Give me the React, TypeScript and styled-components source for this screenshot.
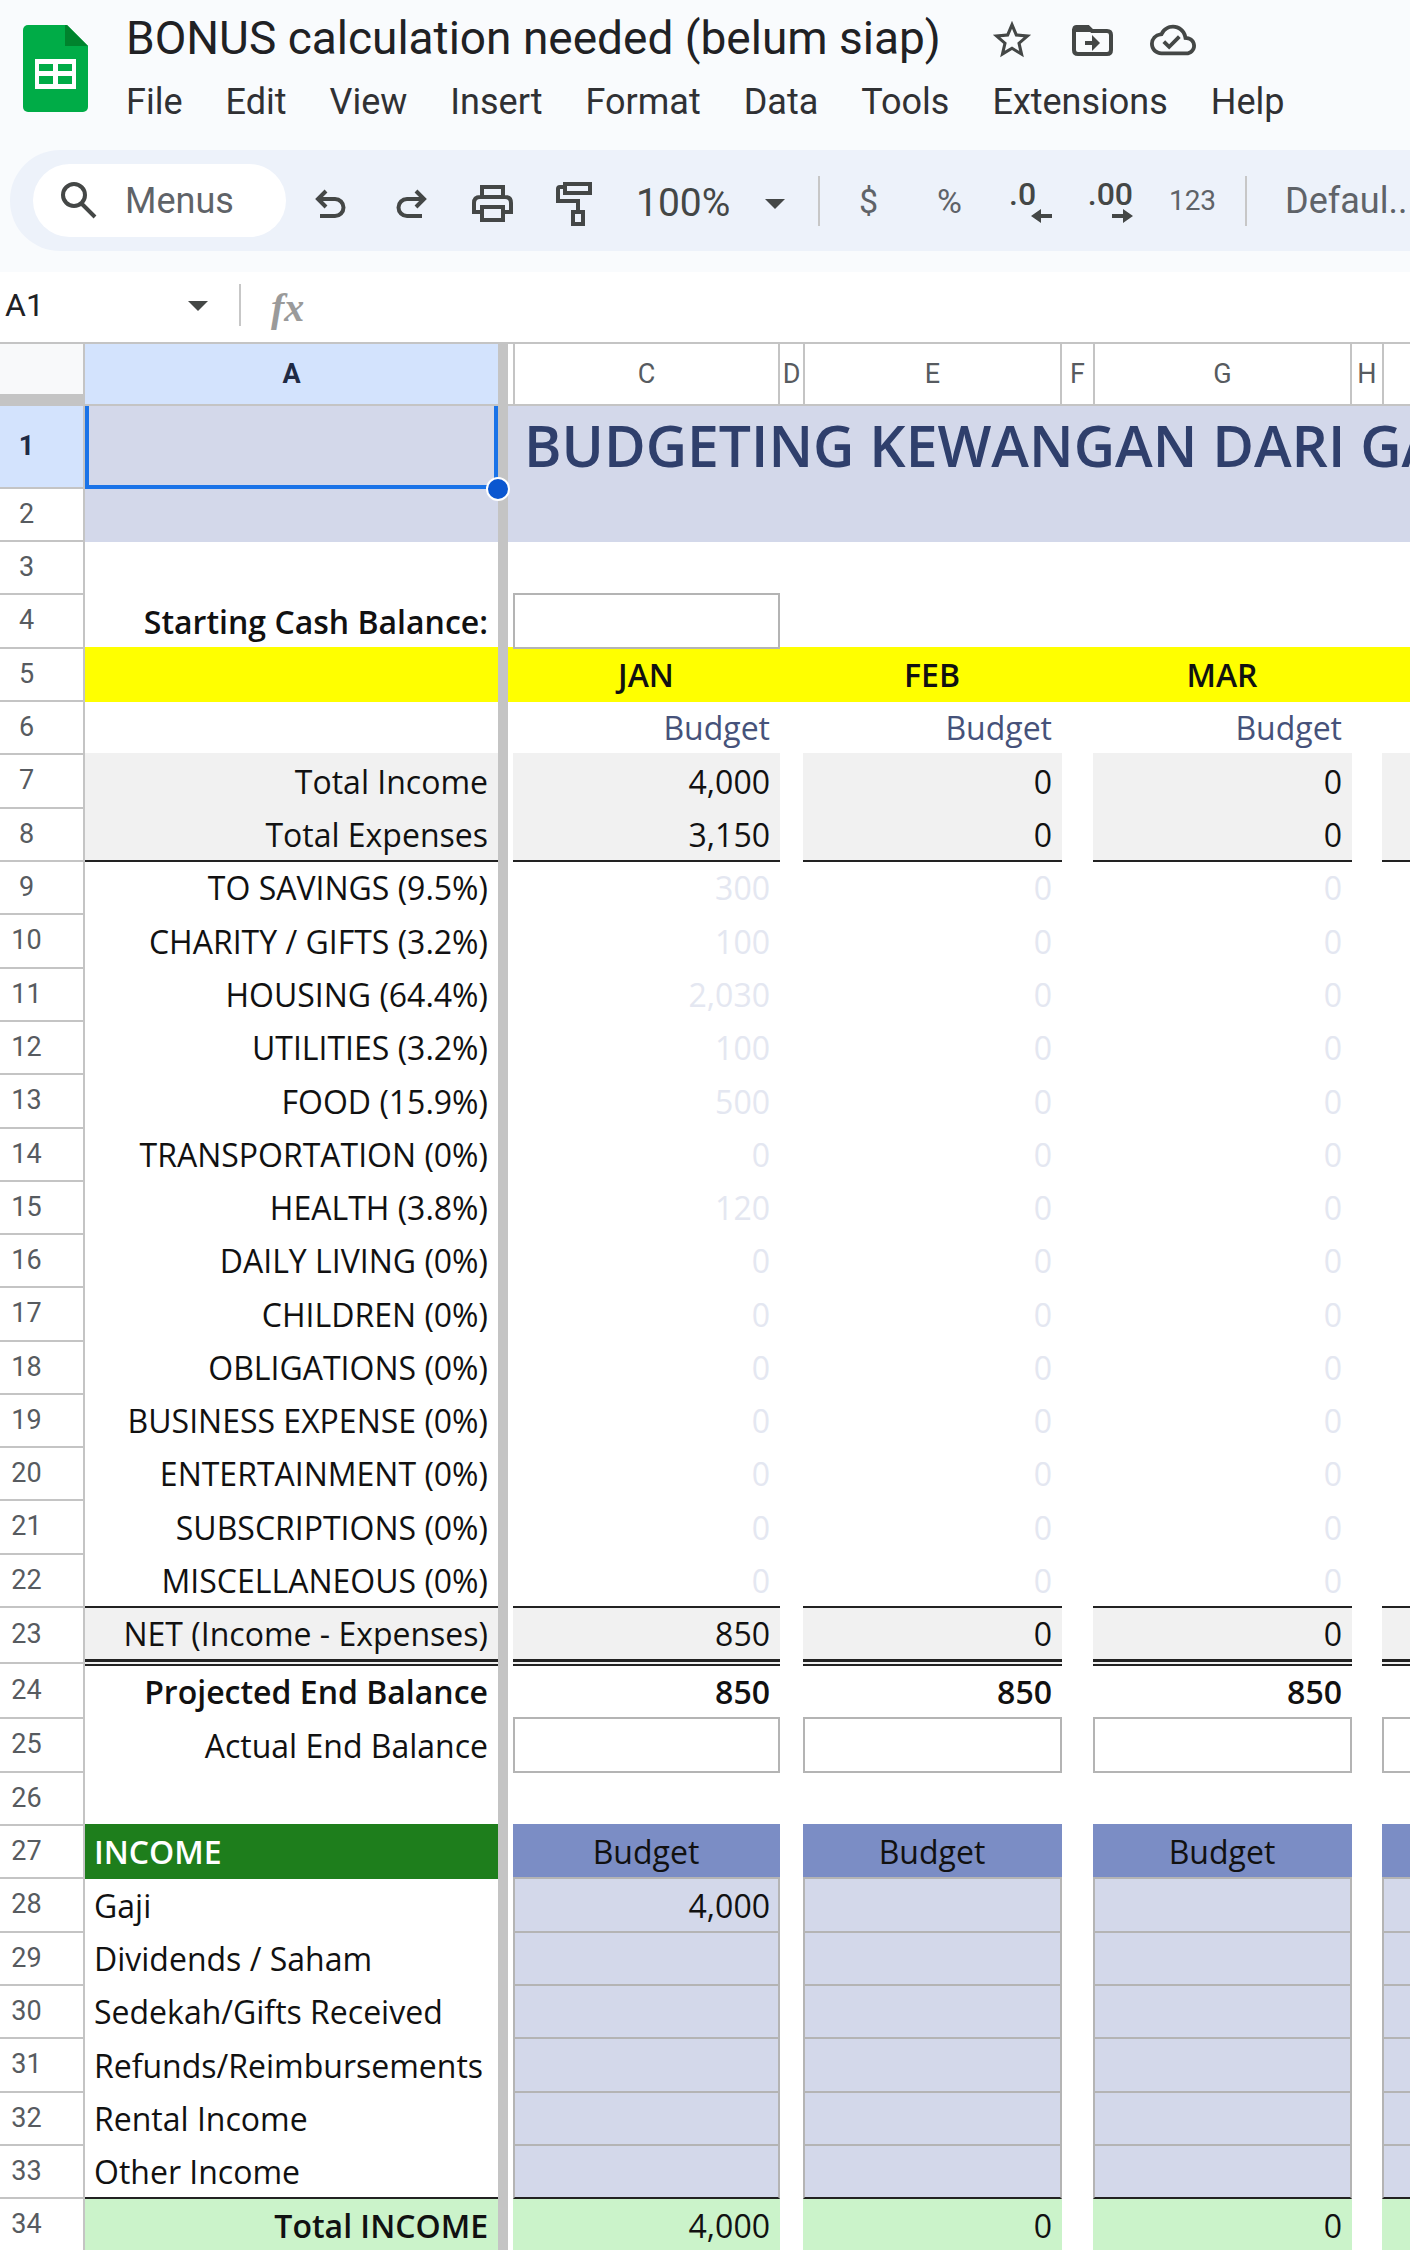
import React from "react";
import styled, { createGlobalStyle, css } from "styled-components";
import { MdStarBorder, MdOutlineCloudDone, MdArrowDropDown } from "react-icons/md";

const UI = `Roboto, "Liberation Sans", sans-serif`;
const SHEET = `"Open Sans", "Noto Sans", sans-serif`;

const C = {
  chrome: "#f9fbfd",
  bar: "#edf2fa",
  icon: "#444746",
  line: "#c4c4c4",
  box: "#b4b4b4",
  ink: "#222222",
  pale: "#d3d8ea",
  blue: "#7b8dc5",
  grey: "#f1f1f1",
  yellow: "#ffff00",
  green: "#1e7e1c",
  mint: "#cbf3ca",
  navy: "#2f3f6c",
  white: "#ffffff",
};

const Global = createGlobalStyle`
  *, *::before, *::after { box-sizing: border-box; }
  body { margin: 0; background: #fff; }
  button, input, select { font: inherit; color: inherit; border: 0; background: none; padding: 0; margin: 0; outline: 0; }
`;

const Page = styled.div`
  display: flex;
  flex-direction: column;
  height: 100vh;
  overflow: hidden;
  font-family: ${UI};
  color: #202124;
`;

const Chrome = styled.header`
  background: ${C.chrome};
  padding: 12px 0 21px;
`;

const TitleBar = styled.div`
  display: flex;
  align-items: flex-start;
  gap: 30px;
  padding: 0 23px;
  height: 138px;
`;

const Logo = styled.svg`
  width: 65px;
  height: 87px;
  margin-top: 13px;
  flex: none;
`;

const TitleColumn = styled.div`
  display: flex;
  flex-direction: column;
  gap: 8px;
  padding-left: 8px;
`;

const TitleRow = styled.div`
  display: flex;
  align-items: center;
  gap: 48px;
  height: 52px;
`;

const DocTitle = styled.h1`
  margin: 0;
  font-size: 46px;
  line-height: 52px;
  font-weight: 400;
  white-space: nowrap;
`;

const TitleActions = styled.div`
  display: flex;
  align-items: center;
  gap: 37px;
  padding-top: 4px;
`;

const IconButton = styled.button`
  display: flex;
  align-items: center;
  justify-content: center;
  flex: none;
  color: ${C.icon};
`;

const MenuBar = styled.nav`
  display: flex;
  gap: 43px;
  font-size: 36px;
  line-height: 60px;
  color: #303134;
`;

const Toolbar = styled.div`
  display: flex;
  align-items: center;
  height: 101px;
  margin-left: 10px;
  padding-left: 23px;
  border-radius: 50px 0 0 50px;
  background: ${C.bar};
  color: ${C.icon};
  overflow: hidden;
`;

const MenuSearch = styled.label`
  display: flex;
  align-items: center;
  gap: 28px;
  width: 253px;
  height: 73px;
  padding-left: 27px;
  border-radius: 37px;
  background: ${C.white};
  flex: none;
  input {
    width: 120px;
    font-size: 36px;
    line-height: 48px;
  }
  input::placeholder { color: #5f6368; opacity: 1; }
`;

const ToolGroup = styled.div`
  display: grid;
  grid-auto-flow: column;
  grid-auto-columns: 81px;
  align-items: center;
  flex: none;
  padding: 0 12px 0 8px;
`;

const HistoryTools = styled(ToolGroup)`
  padding: 5px 0 0 4px;
`;

const Zoom = styled.label`
  display: flex;
  align-items: center;
  flex: none;
  padding: 4px 19px 0 22px;
  select {
    appearance: none;
    width: 115px;
    font-size: 39px;
    line-height: 48px;
  }
`;

const Divider = styled.span<{ $h: number }>`
  width: 2px;
  height: ${(p) => p.$h}px;
  background: #c7c7c7;
  flex: none;
`;

const TextTool = styled.button<{ $size: number }>`
  font-size: ${(p) => p.$size}px;
  line-height: 48px;
  flex: none;
  color: #5f6368;
`;

const FontTool = styled(TextTool)`
  padding-left: 38px;
`;

const FormulaBar = styled.div`
  display: flex;
  align-items: center;
  height: 70px;
  background: ${C.white};
  flex: none;
  padding: 0 0 4px 5px;
`;

const NameField = styled.div`
  display: flex;
  align-items: center;
  width: 234px;
`;

const NameBox = styled.input`
  width: 169px;
  font-size: 32px;
  line-height: 40px;
`;

const Caret = styled.button`
  display: flex;
  width: 48px;
  justify-content: center;
  color: ${C.icon};
`;

const Fx = styled.label`
  padding: 6px 0 0 30px;
  font: italic 700 40px/44px "Liberation Serif", serif;
  color: #9a9a9a;
`;

const FormulaInput = styled.input`
  flex: 1;
  padding-left: 24px;
  font-size: 32px;
`;

const GridArea = styled.main`
  flex: 1;
  min-height: 0;
  overflow: hidden;
  border-top: 2px solid ${C.line};
  background: ${C.white};
`;

const Table = styled.table`
  table-layout: fixed;
  width: 100%;
  min-width: 1641px;
  border-collapse: separate;
  border-spacing: 0;
`;

const Col = styled.col<{ $w: number }>`
  width: ${(p) => p.$w}px;
`;

const HeadRow = styled.tr`
  height: 62px;
`;

const ColHead = styled.th<{ $wide?: boolean; $on?: boolean }>`
  padding: 0;
  font: ${(p) => (p.$on ? 700 : 400)} 27px/32px ${UI};
  color: ${(p) => (p.$on ? "#1f2a44" : "#575b60")};
  background: ${(p) => (p.$on ? "#d3e3fd" : C.white)};
  border-bottom: 2px solid ${C.line};
  ${(p) =>
    p.$wide &&
    css`
      border-left: 2px solid ${C.line};
      border-right: 2px solid ${C.line};
    `}
`;

const Corner = styled.td`
  padding: 0;
  background: #f8f9fa;
  border-right: 2px solid ${C.line};
  border-bottom: 12px solid ${C.line};
`;

const Freeze = styled.td`
  padding: 0;
  background: ${C.line};
`;

const Row = styled.tr<{ $h: number }>`
  height: ${(p) => p.$h}px;
`;

const RowHead = styled.th<{ $on?: boolean }>`
  padding: 0 30px 2px 0;
  font: ${(p) => (p.$on ? 700 : 400)} 27px/32px ${UI};
  color: ${(p) => (p.$on ? "#1f2a44" : "#575b60")};
  background: ${(p) => (p.$on ? "#d3e3fd" : C.white)};
  border-right: 2px solid ${C.line};
  border-bottom: 2px solid ${C.line};
`;

type Align = "left" | "right" | "center";

const Cell = styled.td<{
  $bg?: string;
  $fg?: string;
  $bold?: boolean;
  $align?: Align;
  $below?: string;
  $above?: string;
  $sides?: boolean;
  $double?: boolean;
  $middle?: boolean;
}>`
  padding: 0 10px ${(p) => (p.$middle ? 3 : 5)}px 9px;
  vertical-align: ${(p) => (p.$middle ? "middle" : "bottom")};
  font: ${(p) => (p.$bold ? 600 : 400)} 32px/40px ${SHEET};
  text-align: ${(p) => p.$align ?? "right"};
  white-space: nowrap;
  color: ${(p) => p.$fg ?? "#111"};
  background: ${(p) => p.$bg ?? C.white};
  border-bottom: 2px solid ${(p) => p.$below ?? "transparent"};
  ${(p) => p.$above && css`border-top: 2px solid ${p.$above};`}
  ${(p) =>
    p.$sides &&
    css`
      border-left: 2px solid ${C.box};
      border-right: 2px solid ${C.box};
      padding-left: 7px;
      padding-right: 8px;
    `}
  ${(p) => p.$double && css`box-shadow: inset 0 -3px 0 ${C.ink};`}
`;

const TitleCell = styled(Cell)`
  padding: 0 0 4px 11px;
  font-size: 57px;
  line-height: 72px;
  text-align: left;
`;

const SelectedCell = styled(Cell)`
  position: relative;
  border: 4px solid #1a73e8;
  border-top: 0;
  &::after {
    content: "";
    position: absolute;
    right: -16px;
    bottom: -16px;
    width: 24px;
    height: 24px;
    border: 2px solid #fff;
    border-radius: 50%;
    background: #0b57d0;
  }
`;

type Look = {
  bg?: string;
  fg?: string;
  bold?: boolean;
  align?: Align;
  below?: string;
  above?: string;
  sides?: boolean;
  double?: boolean;
  middle?: boolean;
};

type RowData = {
  h?: number;
  label?: string;
  values?: string[];
  a?: Look;
  v?: Look;
  gap?: Look;
};

const faded: Look = { fg: "#e4e7f1" };
const entry: Look = { bg: C.pale, below: C.box, sides: true };
const left: Look = { align: "left" };
const totals: Look = { bg: C.grey };
const band = (bg: string): Look => ({ bg });

const category = (label: string, jan: string, h = 53): RowData => ({
  h,
  label,
  values: [jan, "0", "0"],
  v: faded,
});

const rows: RowData[] = [
  { h: 83 },
  { a: band(C.pale), v: band(C.pale), gap: band(C.pale) },
  {},
  {
    h: 54,
    label: "Starting Cash Balance:",
    a: { bold: true, below: C.yellow },
    v: { below: C.yellow },
    gap: { below: C.yellow },
  },
  {
    values: ["JAN", "FEB", "MAR"],
    a: band(C.yellow),
    v: { bg: C.yellow, bold: true, align: "center" },
    gap: band(C.yellow),
  },
  { values: ["Budget", "Budget", "Budget"], a: { below: C.grey }, v: { fg: "#46527a", below: C.grey } },
  { h: 54, label: "Total Income", values: ["4,000", "0", "0"], a: totals, v: totals },
  {
    label: "Total Expenses",
    values: ["3,150", "0", "0"],
    a: { ...totals, below: C.ink },
    v: { ...totals, below: C.ink },
  },
  category("TO SAVINGS (9.5%)", "300"),
  category("CHARITY / GIFTS (3.2%)", "100", 54),
  category("HOUSING (64.4%)", "2,030"),
  category("UTILITIES (3.2%)", "100"),
  category("FOOD (15.9%)", "500", 54),
  category("TRANSPORTATION (0%)", "0"),
  category("HEALTH (3.8%)", "120"),
  category("DAILY LIVING (0%)", "0"),
  category("CHILDREN (0%)", "0", 54),
  category("OBLIGATIONS (0%)", "0"),
  category("BUSINESS EXPENSE (0%)", "0"),
  category("ENTERTAINMENT (0%)", "0"),
  category("SUBSCRIPTIONS (0%)", "0", 54),
  {
    label: "MISCELLANEOUS (0%)",
    values: ["0", "0", "0"],
    a: { below: C.ink },
    v: { ...faded, below: C.ink },
  },
  {
    h: 56,
    label: "NET (Income - Expenses)",
    values: ["850", "0", "0"],
    a: { bg: C.grey, double: true, middle: true },
    v: { bg: C.grey, double: true, middle: true },
  },
  {
    h: 55,
    label: "Projected End Balance",
    values: ["850", "850", "850"],
    a: { bold: true, above: C.ink },
    v: { bold: true, above: C.ink, below: C.box },
  },
  { h: 54, label: "Actual End Balance", v: { sides: true, below: C.box } },
  { a: { below: C.green }, v: { below: C.blue } },
  {
    label: "INCOME",
    values: ["Budget", "Budget", "Budget"],
    a: { bg: C.green, fg: "#fff", bold: true, align: "left" },
    v: { bg: C.blue, align: "center", below: C.box },
  },
  { h: 54, label: "Gaji", values: ["4,000"], a: left, v: entry },
  { label: "Dividends / Saham", a: left, v: entry },
  { label: "Sedekah/Gifts Received", a: left, v: entry },
  { h: 54, label: "Refunds/Reimbursements", a: left, v: entry },
  { label: "Rental Income", a: left, v: entry },
  { label: "Other Income", a: { ...left, below: C.ink }, v: { ...entry, below: C.ink } },
  {
    h: 54,
    label: "Total INCOME",
    values: ["4,000", "0", "0"],
    a: { bg: C.mint, bold: true },
    v: { bg: C.mint },
  },
];

const look = (l: Look = {}) => ({
  $bg: l.bg,
  $fg: l.fg,
  $bold: l.bold,
  $align: l.align,
  $below: l.below,
  $above: l.above,
  $sides: l.sides,
  $double: l.double,
  $middle: l.middle,
});

const valueLook = (row: number, col: number, l?: Look): Look | undefined => {
  if (col === 0 && row === 3) return { below: C.box };
  if (col === 0 && row === 4) return { sides: true, below: C.box };
  return l;
};

function SheetRow({ n, row }: { n: number; row: RowData }) {
  if (n === 1) {
    return (
      <Row $h={row.h ?? 53}>
        <RowHead scope="row" $on>1</RowHead>
        <SelectedCell $bg={C.pale} />
        <Freeze />
        <Cell $bg={C.pale} />
        <TitleCell colSpan={7} $bg={C.pale} $fg={C.navy} $bold $middle>
          BUDGETING KEWANGAN DARI GA
        </TitleCell>
      </Row>
    );
  }
  return (
    <Row $h={row.h ?? 53}>
      <RowHead scope="row">{n}</RowHead>
      <Cell {...look(row.a)}>{row.label}</Cell>
      <Freeze />
      <Cell {...look(row.gap)} />
      {[0, 1, 2, 3].map((i) => (
        <React.Fragment key={i}>
          {i > 0 && <Cell {...look(row.gap)} />}
          <Cell {...look(valueLook(n, i, row.v))}>{row.values?.[i]}</Cell>
        </React.Fragment>
      ))}
    </Row>
  );
}

const SheetsLogo = () => (
  <Logo viewBox="0 0 65 87" aria-hidden="true">
    <path d="M5 0h39l21 21v61a5 5 0 0 1-5 5H5a5 5 0 0 1-5-5V5a5 5 0 0 1 5-5z" fill="#00ac47" />
    <path d="M42 0h2l21 21H42z" fill="#00832d" />
    <path d="M12 34h41v30H12zM16 39v7h14v-7zM35 39v7h14v-7zM16 51v8h14v-8zM35 51v8h14v-8z" fill="#fff" fillRule="evenodd" />
  </Logo>
);

const Stroke = ({ w, h, d, sw = 4 }: { w: number; h: number; d: string; sw?: number }) => (
  <svg width={w} height={h} viewBox={`0 0 ${w} ${h}`} fill="none" stroke="currentColor" strokeWidth={sw} aria-hidden="true">
    <path d={d} />
  </svg>
);

const FolderMove = () => (
  <svg width="41" height="31" viewBox="0 0 41 31" fill="none" stroke="currentColor" strokeWidth="4" aria-hidden="true">
    <path d="M2 4v21q0 4 4 4h29q4 0 4-4V10q0-4-4-4H20l-4-4H4q-2 0-2 4z" />
    <path d="M2 2h14l5 5H2z" fill="currentColor" stroke="none" />
    <path d="M13 18h10" />
    <path d="M20 10l8 8-8 8z" fill="currentColor" stroke="none" />
  </svg>
);

const DecimalText = styled.span`
  font-size: 32px;
  font-weight: 500;
  line-height: 30px;
`;

const DecimalTool = styled(IconButton)<{ $start?: boolean }>`
  flex-direction: column;
  align-items: flex-end;
  width: 43px;
  justify-self: center;
  ${DecimalText} {
    align-self: ${(p) => (p.$start ? "flex-start" : "flex-end")};
  }
`;

const ArrowLeft = () => (
  <svg width="21" height="14" viewBox="0 0 21 14" fill="currentColor" aria-hidden="true">
    <path d="M0 7l10-7v5h11v4H10v5z" />
  </svg>
);

const ArrowRight = () => (
  <svg width="21" height="14" viewBox="0 0 21 14" fill="currentColor" aria-hidden="true">
    <path d="M21 7L11 0v5H0v4h11v5z" />
  </svg>
);

const columns = [85, 413, 10, 5, 267, 23, 259, 31, 259, 30, 259];
const menus = ["File", "Edit", "View", "Insert", "Format", "Data", "Tools", "Extensions", "Help"];

export default function App() {
  return (
    <Page>
      <Global />
      <Chrome>
        <TitleBar>
          <SheetsLogo />
          <TitleColumn>
            <TitleRow>
              <DocTitle>BONUS calculation needed (belum siap)</DocTitle>
              <TitleActions>
                <IconButton aria-label="Star"><MdStarBorder size={46} /></IconButton>
                <IconButton aria-label="Move"><FolderMove /></IconButton>
                <IconButton aria-label="Saved to Drive"><MdOutlineCloudDone size={46} /></IconButton>
              </TitleActions>
            </TitleRow>
            <MenuBar>
              {menus.map((m) => (
                <button key={m}>{m}</button>
              ))}
            </MenuBar>
          </TitleColumn>
        </TitleBar>
        <Toolbar>
          <MenuSearch>
            <Stroke w={37} h={37} d="M25 13a11 11 0 1 1-22 0a11 11 0 1 1 22 0M21 21l14 14" />
            <input placeholder="Menus" aria-label="Menus" />
          </MenuSearch>
          <HistoryTools>
            <IconButton aria-label="Undo"><Stroke w={31} h={29} d="M11 2L3 10l8 8M3 10h17a8 8 0 0 1 0 17H5" /></IconButton>
            <IconButton aria-label="Redo"><Stroke w={31} h={29} d="M20 2l8 8-8 8M28 10H11a8 8 0 0 0 0 17h15" /></IconButton>
            <IconButton aria-label="Print">
              <Stroke w={41} h={37} d="M10 12V2h21v10M9 27H2V18q0-6 6-6h25q6 0 6 6v9h-7M10 22h21v13H10z" />
            </IconButton>
            <IconButton aria-label="Paint format">
              <Stroke w={37} h={45} d="M10 3h25v9H10zM10 6H5q-2 0-2 2v12h20v10M18 31h10v12H18z" />
            </IconButton>
          </HistoryTools>
          <Zoom>
            <select aria-label="Zoom" defaultValue="100%">
              <option>100%</option>
              <option>150%</option>
            </select>
            <MdArrowDropDown size={48} />
          </Zoom>
          <Divider $h={50} />
          <ToolGroup>
            <TextTool $size={34}>$</TextTool>
            <TextTool $size={34}>%</TextTool>
            <DecimalTool aria-label="Decrease decimal places" $start>
              <DecimalText>.0</DecimalText>
              <ArrowLeft />
            </DecimalTool>
            <DecimalTool aria-label="Increase decimal places">
              <DecimalText>.00</DecimalText>
              <ArrowRight />
            </DecimalTool>
            <TextTool $size={28}>123</TextTool>
          </ToolGroup>
          <Divider $h={50} />
          <FontTool $size={36}>Defaul..</FontTool>
        </Toolbar>
      </Chrome>
      <FormulaBar>
        <NameField>
          <NameBox aria-label="Name box" defaultValue="A1" />
          <Caret aria-label="Named ranges"><MdArrowDropDown size={48} /></Caret>
        </NameField>
        <Divider $h={42} />
        <Fx htmlFor="formula">fx</Fx>
        <FormulaInput id="formula" />
      </FormulaBar>
      <GridArea>
        <Table>
          <colgroup>
            {columns.map((w, i) => (
              <Col key={i} $w={w} />
            ))}
          </colgroup>
          <thead>
            <HeadRow>
              <Corner />
              <ColHead scope="col" $on>A</ColHead>
              <Freeze />
              <ColHead />
              <ColHead scope="col" $wide>C</ColHead>
              <ColHead scope="col">D</ColHead>
              <ColHead scope="col" $wide>E</ColHead>
              <ColHead scope="col">F</ColHead>
              <ColHead scope="col" $wide>G</ColHead>
              <ColHead scope="col">H</ColHead>
              <ColHead scope="col" $wide />
            </HeadRow>
          </thead>
          <tbody>
            {rows.map((row, i) => (
              <SheetRow key={i} n={i + 1} row={row} />
            ))}
          </tbody>
        </Table>
      </GridArea>
    </Page>
  );
}
